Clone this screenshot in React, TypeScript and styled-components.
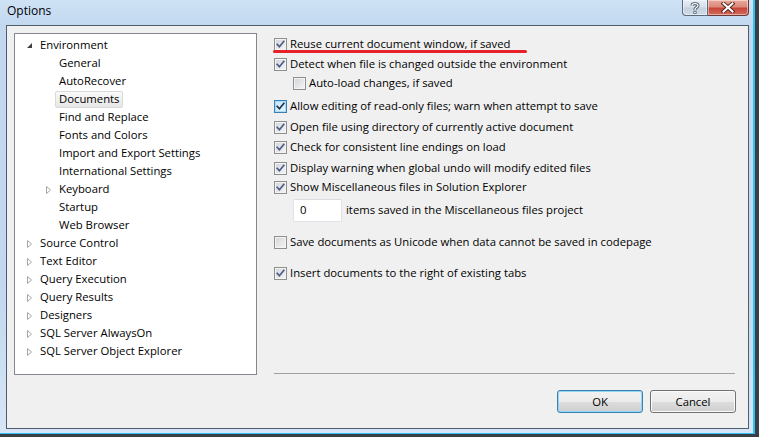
import React from 'react';
import styled, { createGlobalStyle } from 'styled-components';

const FONT = '"Segoe UI", "Open Sans", "Noto Sans", sans-serif';
const SIZE = '11.3px';

const Global = createGlobalStyle`
  html, body { margin: 0; padding: 0; background: #2f3338; }
  body { font-family: ${FONT}; font-size: ${SIZE}; }
  #root { width: 759px; height: 437px; }
`;

const Window = styled.div`
  box-sizing: border-box;
  width: 759px;
  height: 437px;
  display: flex;
  flex-direction: column;
  background: linear-gradient(to bottom, #cfe2f5 0px, #c2d8ef 26px, #c4d9ef 300px, #d6e6f6 100%);
  border-right: 4px solid #3a3f45;
  border-bottom: 3px solid #3a3f45;
  box-shadow: inset -2px -1px 0 #2bc4f5;
  color: #000;
  font-family: ${FONT};
`;

const TitleBar = styled.div`
  height: 25px;
  flex: none;
  display: flex;
  align-items: flex-start;
`;

const Title = styled.div`
  padding: 3px 0 0 7px;
  font-size: 12px;
  line-height: 16px;
  color: #000;
`;

const TitleButtons = styled.div`
  margin-left: auto;
  margin-right: 6px;
  display: flex;
`;

const CaptionButton = styled.div<{ $close?: boolean }>`
  box-sizing: border-box;
  height: 16px;
  width: ${(p) => (p.$close ? 41 : 26)}px;
  border: 1px solid ${(p) => (p.$close ? '#6b3a34' : '#5b6b7e')};
  border-top: none;
  border-radius: ${(p) => (p.$close ? '0 0 4px 0' : '0 0 0 4px')};
  ${(p) => (p.$close ? 'border-left: none;' : '')}
  background: ${(p) =>
    p.$close
      ? 'linear-gradient(to bottom, #e9a99b 0%, #dc8a7a 45%, #c7463a 55%, #d46a5c 100%)'
      : 'linear-gradient(to bottom, #e6edf4 0%, #d7e0ea 45%, #c5d1de 55%, #d0dbe6 100%)'};
  display: flex;
  align-items: center;
  justify-content: center;
  box-shadow: inset 0 0 0 1px rgba(255, 255, 255, 0.45);
`;

const Client = styled.div`
  flex: 1;
  margin: 0 6px 5px 6px;
  border: 1px solid #4f5d6e;
  background: #f0f0f0;
  display: flex;
  min-height: 0;
`;

const TreePanel = styled.div`
  box-sizing: border-box;
  flex: none;
  margin: 7px 0 0 7px;
  width: 243px;
  height: 342px;
  border: 1px solid #828790;
  background: #fff;
  padding-top: 2px;
`;

const TreeRow = styled.div<{ $level: number }>`
  height: 18px;
  display: flex;
  align-items: center;
  padding-left: ${(p) => 12 + p.$level * 19}px;
`;

const Expander = styled.span`
  width: 9px;
  height: 18px;
  flex: none;
  display: block;
`;

const TreeLabel = styled.span<{ $selected?: boolean }>`
  box-sizing: border-box;
  height: 17px;
  line-height: 13px;
  padding: 0 3px 2px 3px;
  border: 1px solid ${(p) => (p.$selected ? '#d9d9d9' : 'transparent')};
  border-radius: 2px;
  background: ${(p) => (p.$selected ? 'linear-gradient(to bottom, #fafafa, #e6e6e6)' : 'transparent')};
  white-space: nowrap;
  color: #000;
`;

const RightPane = styled.div`
  flex: 1;
  display: flex;
  flex-direction: column;
  margin: 0 12px 0 17px;
  padding: 8px 0 15px 0;
  min-width: 0;
`;

const OptionRow = styled.div<{ $mt: number; $indent?: number }>`
  position: relative;
  height: 20px;
  margin-top: ${(p) => p.$mt}px;
  padding-left: ${(p) => p.$indent || 0}px;
  display: flex;
  align-items: center;
  white-space: nowrap;
`;

const InputRow = styled(OptionRow)`
  height: 23px;
`;

const OptionText = styled.span`
  margin-left: 3px;
  line-height: 15px;
  padding-bottom: 2px;
`;

const Box = styled.span<{ $focus?: boolean }>`
  box-sizing: border-box;
  width: 13px;
  height: 13px;
  flex: none;
  border: 1px solid ${(p) => (p.$focus ? '#3c7fb1' : '#8e8f8f')};
  background: ${(p) =>
    p.$focus
      ? 'linear-gradient(135deg, #c5e5f7 0%, #e8f6fd 100%)'
      : 'linear-gradient(135deg, #d2d4d8 0%, #f6f6f6 100%)'};
  box-shadow: inset 0 0 0 1px ${(p) => (p.$focus ? '#a9dcf6' : '#f4f4f4')};
  display: flex;
  align-items: center;
  justify-content: center;
`;

const NumberBox = styled.div`
  box-sizing: border-box;
  width: 49px;
  height: 23px;
  background: #fff;
  border: 1px solid #e2e3ea;
  border-top-color: #dadce2;
  border-radius: 2px;
  padding-left: 6px;
  line-height: 19px;
`;

const InputLabel = styled.span`
  margin-left: 4px;
  line-height: 15px;
  padding-bottom: 2px;
`;

const Annotation = styled.div`
  position: absolute;
  left: -1px;
  top: 16px;
  width: 254px;
  height: 3px;
  background: #e8202a;
  border-radius: 2px;
`;

const Separator = styled.div`
  margin-top: auto;
  height: 1px;
  background: #a0a0a0;
  margin-right: 1px;
`;

const ButtonRow = styled.div`
  margin-top: 16px;
  display: flex;
  justify-content: flex-end;
  gap: 7px;
`;

const DialogButton = styled.button<{ $default?: boolean }>`
  box-sizing: border-box;
  width: 86px;
  height: 23px;
  padding: 0 0 1px 0;
  font-family: ${FONT};
  font-size: ${SIZE};
  color: #000;
  border-radius: 3px;
  border: 1px solid ${(p) => (p.$default ? '#3c7fb1' : '#707070')};
  background: linear-gradient(to bottom, #f2f2f2 0%, #ebebeb 50%, #dddddd 51%, #cfcfcf 100%);
  box-shadow: inset 0 0 0 1px ${(p) => (p.$default ? '#8fd6f7' : '#fbfbfb')};
`;

const Check = ({ checked, focus }: { checked: boolean; focus?: boolean }) => (
  <Box $focus={focus}>
    {checked && (
      <svg width="11" height="11" viewBox="0 0 11 11">
        <path
          d="M2.2 5.4 L4.4 7.8 L8.8 2.4"
          fill="none"
          stroke={focus ? '#21314f' : '#4a5d8a'}
          strokeWidth="1.7"
          strokeLinecap="square"
        />
      </svg>
    )}
  </Box>
);

type TreeItem = { label: string; level: number; exp?: 'open' | 'closed'; selected?: boolean };

const tree: TreeItem[] = [
  { label: 'Environment', level: 0, exp: 'open' },
  { label: 'General', level: 1 },
  { label: 'AutoRecover', level: 1 },
  { label: 'Documents', level: 1, selected: true },
  { label: 'Find and Replace', level: 1 },
  { label: 'Fonts and Colors', level: 1 },
  { label: 'Import and Export Settings', level: 1 },
  { label: 'International Settings', level: 1 },
  { label: 'Keyboard', level: 1, exp: 'closed' },
  { label: 'Startup', level: 1 },
  { label: 'Web Browser', level: 1 },
  { label: 'Source Control', level: 0, exp: 'closed' },
  { label: 'Text Editor', level: 0, exp: 'closed' },
  { label: 'Query Execution', level: 0, exp: 'closed' },
  { label: 'Query Results', level: 0, exp: 'closed' },
  { label: 'Designers', level: 0, exp: 'closed' },
  { label: 'SQL Server AlwaysOn', level: 0, exp: 'closed' },
  { label: 'SQL Server Object Explorer', level: 0, exp: 'closed' },
];

const ExpanderIcon = ({ exp }: { exp?: 'open' | 'closed' }) => (
  <Expander>
    {exp === 'open' && (
      <svg width="9" height="18" viewBox="0 0 9 18">
        <polygon points="5,7 5,12 0,12" fill="#3f3f3f" />
      </svg>
    )}
    {exp === 'closed' && (
      <svg width="9" height="18" viewBox="0 0 9 18">
        <polygon points="0.5,6.5 0.5,13.5 4.5,10" fill="#fff" stroke="#a6a6a6" strokeWidth="1" />
      </svg>
    )}
  </Expander>
);

export default function App() {
  return (
    <>
      <Global />
      <Window>
        <TitleBar>
          <Title>Options</Title>
          <TitleButtons>
            <CaptionButton>
              <svg width="10" height="12" viewBox="0 0 10 12">
                <path
                  d="M2 3.5 C2 1 8 1 8 3.5 C8 5.5 5 5.5 5 7.5 L5 8.2"
                  fill="none"
                  stroke="#3e4d60"
                  strokeWidth="3"
                />
                <path
                  d="M2 3.5 C2 1 8 1 8 3.5 C8 5.5 5 5.5 5 7.5 L5 8.2"
                  fill="none"
                  stroke="#fff"
                  strokeWidth="1.4"
                />
                <rect x="3.5" y="9.2" width="3" height="2.6" fill="#3e4d60" />
                <rect x="4.2" y="9.8" width="1.6" height="1.4" fill="#fff" />
              </svg>
            </CaptionButton>
            <CaptionButton $close>
              <svg width="14" height="11" viewBox="0 0 14 11">
                <path d="M2.5 1.5 L11.5 9.5 M11.5 1.5 L2.5 9.5" stroke="#5a2a24" strokeWidth="4" strokeLinecap="square" />
                <path d="M2.5 1.5 L11.5 9.5 M11.5 1.5 L2.5 9.5" stroke="#fff" strokeWidth="2" strokeLinecap="square" />
              </svg>
            </CaptionButton>
          </TitleButtons>
        </TitleBar>
        <Client>
          <TreePanel>
            {tree.map((t) => (
              <TreeRow key={t.label} $level={t.level}>
                <ExpanderIcon exp={t.exp} />
                <TreeLabel $selected={t.selected}>{t.label}</TreeLabel>
              </TreeRow>
            ))}
          </TreePanel>
          <RightPane>
            <OptionRow $mt={0}>
              <Check checked />
              <OptionText>Reuse current document window, if saved</OptionText>
              <Annotation />
            </OptionRow>
            <OptionRow $mt={0}>
              <Check checked />
              <OptionText>Detect when file is changed outside the environment</OptionText>
            </OptionRow>
            <OptionRow $mt={-1} $indent={19}>
              <Check checked={false} />
              <OptionText>Auto-load changes, if saved</OptionText>
            </OptionRow>
            <OptionRow $mt={3}>
              <Check checked focus />
              <OptionText>Allow editing of read-only files; warn when attempt to save</OptionText>
            </OptionRow>
            <OptionRow $mt={1}>
              <Check checked />
              <OptionText>Open file using directory of currently active document</OptionText>
            </OptionRow>
            <OptionRow $mt={0}>
              <Check checked />
              <OptionText>Check for consistent line endings on load</OptionText>
            </OptionRow>
            <OptionRow $mt={1}>
              <Check checked />
              <OptionText>Display warning when global undo will modify edited files</OptionText>
            </OptionRow>
            <OptionRow $mt={-1}>
              <Check checked />
              <OptionText>Show Miscellaneous files in Solution Explorer</OptionText>
            </OptionRow>
            <InputRow $mt={2} $indent={19}>
              <NumberBox>0</NumberBox>
              <InputLabel>items saved in the Miscellaneous files project</InputLabel>
            </InputRow>
            <OptionRow $mt={10}>
              <Check checked={false} />
              <OptionText>Save documents as Unicode when data cannot be saved in codepage</OptionText>
            </OptionRow>
            <OptionRow $mt={11}>
              <Check checked />
              <OptionText>Insert documents to the right of existing tabs</OptionText>
            </OptionRow>
            <Separator />
            <ButtonRow>
              <DialogButton $default>OK</DialogButton>
              <DialogButton>Cancel</DialogButton>
            </ButtonRow>
          </RightPane>
        </Client>
      </Window>
    </>
  );
}
